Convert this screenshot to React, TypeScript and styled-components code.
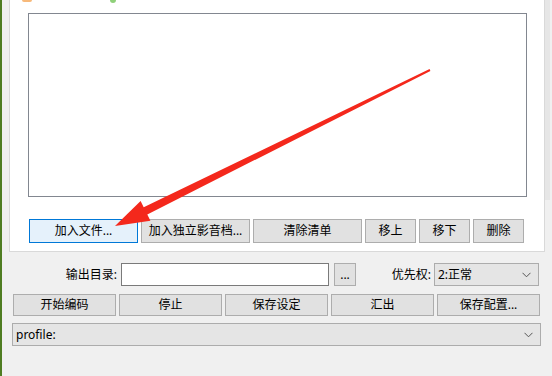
import React from "react";
import styled, { createGlobalStyle } from "styled-components";

const Global = createGlobalStyle`
  html, body { margin: 0; padding: 0; background: #f0f0f0; }
  body { width: 552px; height: 376px; overflow: hidden; }
  * { box-sizing: border-box; }
`;

const FONT = `"Noto Sans", "Noto Sans CJK SC", sans-serif`;

const Page = styled.div`
  position: relative;
  display: flex;
  width: 552px;
  height: 376px;
  background: #f0f0f0;
  font-family: ${FONT};
  font-size: 12px;
  color: #000;
  overflow: hidden;
`;

const EdgeLine = styled.div`
  width: 2px;
  flex: none;
  background: #4f7d22;
`;

const Main = styled.div`
  flex: 1;
  display: flex;
  flex-direction: column;
`;

const TopArea = styled.div`
  display: flex;
  align-items: flex-start;
  padding-left: 7px;
  height: 252px;
`;

const TabPanel = styled.div`
  width: 536px;
  height: 252px;
  background: #fff;
  border: 1px solid #d9d9d9;
  border-top: none;
  display: flex;
  flex-direction: column;
`;

const TopIcons = styled.div`
  height: 13px;
  display: flex;
  align-items: flex-start;
  padding-left: 12px;
`;

const Peek = styled.span<{ $color: string; $w: number; $h: number; $gap: number }>`
  display: block;
  width: ${(p) => p.$w}px;
  height: ${(p) => p.$h}px;
  margin-left: ${(p) => p.$gap}px;
  background: ${(p) => p.$color};
  border-radius: 0 0 3px 3px;
`;

const FileList = styled.div`
  margin-left: 18px;
  width: 499px;
  height: 184px;
  border: 1px solid #828790;
  background: #fff;
`;

const ButtonRow = styled.div`
  display: flex;
  gap: 3px;
  margin-top: 22px;
  margin-left: 19px;
`;

const Btn = styled.button<{ $w: number; $h?: number; $focus?: boolean }>`
  width: ${(p) => p.$w}px;
  height: ${(p) => p.$h ?? 24}px;
  padding: 0;
  margin: 0;
  font-family: ${FONT};
  font-size: 12px;
  line-height: 14px;
  color: #000;
  background: ${(p) => (p.$focus ? "#e5f1fb" : "#e1e1e1")};
  border: 1px solid ${(p) => (p.$focus ? "#0078d7" : "#adadad")};
  display: flex;
  align-items: center;
  justify-content: center;
`;

const ScrollStrip = styled.div`
  width: 5px;
  height: 200px;
  background: #e6e6e6;
`;

const Settings = styled.div`
  display: flex;
  flex-direction: column;
  padding-top: 11px;
`;

const FieldRow = styled.div`
  display: flex;
  align-items: center;
  height: 23px;
`;

const Label = styled.div<{ $w: number; $pr: number }>`
  width: ${(p) => p.$w}px;
  padding-right: ${(p) => p.$pr}px;
  text-align: right;
  line-height: 14px;
  white-space: nowrap;
`;

const TextInput = styled.div`
  width: 208px;
  height: 23px;
  background: #fff;
  border: 1px solid #7a7a7a;
`;

const Spacer = styled.div<{ $w: number }>`
  width: ${(p) => p.$w}px;
  flex: none;
`;

const Combo = styled.div<{ $w: number }>`
  width: ${(p) => p.$w}px;
  height: 23px;
  background: #e5e5e5;
  border: 1px solid #acacac;
  display: flex;
  align-items: center;
  justify-content: space-between;
  padding: 0 7px 0 3px;
  line-height: 14px;
`;

const ActionRow = styled.div`
  display: flex;
  gap: 3px;
  margin-top: 8px;
  padding-left: 11px;
`;

const ProfileRow = styled.div`
  margin-top: 7px;
  padding-left: 10px;
`;

const Overlay = styled.svg`
  position: absolute;
  left: 0;
  top: 0;
  pointer-events: none;
`;

const Chevron = () => (
  <svg width="9" height="6" viewBox="0 0 9 6">
    <polyline points="0.5,0.8 4.5,4.8 8.5,0.8" fill="none" stroke="#555" strokeWidth="1" />
  </svg>
);

export default function App() {
  const actions = ["开始编码", "停止", "保存设定", "汇出", "保存配置..."];
  return (
    <Page>
      <Global />
      <EdgeLine />
      <Main>
        <TopArea>
          <TabPanel>
            <TopIcons>
              <Peek $color="#f7b97a" $w={10} $h={2} $gap={0} />
              <Peek $color="#8fd07a" $w={6} $h={3} $gap={78} />
            </TopIcons>
            <FileList />
            <ButtonRow>
              <Btn $w={109} $focus>加入文件...</Btn>
              <Btn $w={109}>加入独立影音档...</Btn>
              <Btn $w={109}>清除清单</Btn>
              <Btn $w={51}>移上</Btn>
              <Btn $w={51}>移下</Btn>
              <Btn $w={51}>删除</Btn>
            </ButtonRow>
          </TabPanel>
          <ScrollStrip />
        </TopArea>
        <Settings>
          <FieldRow>
            <Label $w={119} $pr={4}>输出目录:</Label>
            <TextInput />
            <Spacer $w={5} />
            <Btn $w={22} $h={23}>...</Btn>
            <Label $w={78} $pr={3}>优先权:</Label>
            <Combo $w={105}>
              <span>2:正常</span>
              <Chevron />
            </Combo>
          </FieldRow>
          <ActionRow>
            {actions.map((a) => (
              <Btn key={a} $w={103} $h={22}>{a}</Btn>
            ))}
          </ActionRow>
          <ProfileRow>
            <Combo $w={529}>
              <span>profile:</span>
              <Chevron />
            </Combo>
          </ProfileRow>
        </Settings>
      </Main>
      <Overlay width="552" height="376" viewBox="0 0 552 376">
        <polygon
          points="429.6,69.1 143.7,207.3 140.6,201 115,226 150.4,220.8 147.3,214.5 430.4,70.9"
          fill="#f4281c"
        />
      </Overlay>
    </Page>
  );
}
